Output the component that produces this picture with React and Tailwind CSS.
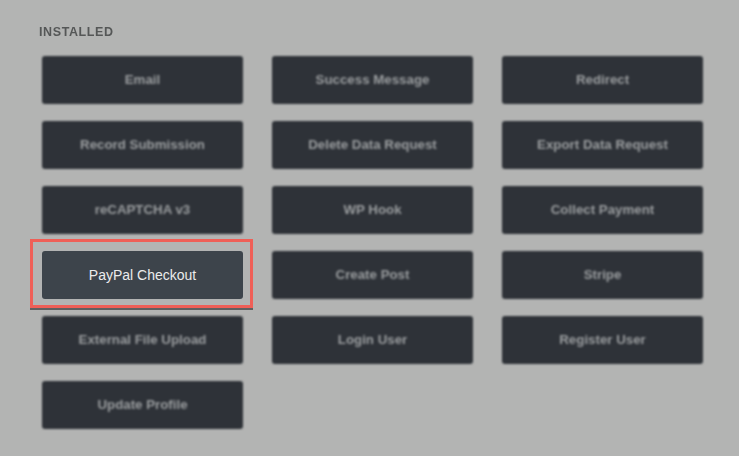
import React from 'react';

// liste des actions installées
const actions = [
    'Email', 'Success Message', 'Redirect',
    'Record Submission', 'Delete Data Request', 'Export Data Request',
    'reCAPTCHA v3', 'WP Hook', 'Collect Payment',
    'PayPal Checkout', 'Create Post', 'Stripe',
    'External File Upload', 'Login User', 'Register User',
    'Update Profile',
];

const ActionButton = ({ label, active }) => {
    if (active) {
        return (
            <div className="relative">
                <div className="h-[48px] rounded-[3px] bg-[#3d444b] flex items-center justify-center text-[14px] text-[#ececec]">
                    {label}
                </div>
                {/* cadre rouge d'annotation */}
                <div className="absolute -left-[12px] -right-[10px] -top-[12px] -bottom-[9px] border-[3px] border-[#ef5f57] shadow-[0_2px_0_rgba(40,40,40,0.6)]" />
            </div>
        );
    }
    return (
        <div className="h-[48px] rounded-[3px] bg-[#2e3238] flex items-center justify-center text-[13.3px] font-bold text-[#9a9d9f] blur-[0.8px]">
            {label}
        </div>
    );
};

export default function App() {
    return (
        <div
            className="w-[739px] h-[456px] bg-[#b3b4b3] overflow-hidden pt-[25px] pl-[39px]"
            style={{ fontFamily: '"Liberation Sans", Arial, sans-serif' }}
        >
            <h2 className="text-[12.5px] font-bold tracking-[0.6px] text-[#555757] blur-[0.6px] leading-[14px]">
                INSTALLED
            </h2>
            <div className="grid grid-cols-[201px_201px_201px] gap-x-[29px] gap-y-[17px] mt-[17px] ml-[3px]">
                {actions.map((a) => (
                    <ActionButton key={a} label={a} active={a === 'PayPal Checkout'} />
                ))}
            </div>
        </div>
    );
}
